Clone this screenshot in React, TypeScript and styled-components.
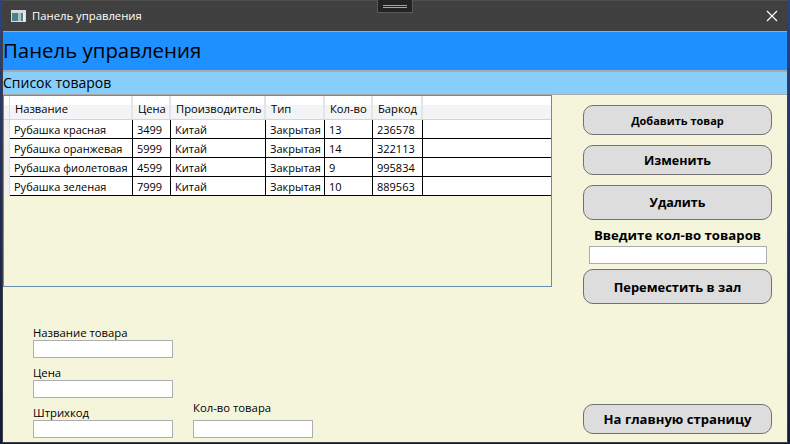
import styled, { createGlobalStyle } from "styled-components";
import { ReactElement } from "react";

const GlobalStyle = createGlobalStyle`
    html, body {
        margin: 0;
        padding: 0;
        background: #16213f;
    }

    * {
        box-sizing: border-box;
    }
`;

const Desktop = styled.div`
    position: relative;
    width: 790px;
    height: 444px;
    overflow: hidden;
    display: flex;
    padding: 0 2px 1px 2px;
    background: linear-gradient(#2a4486, #1c2d5e 45%, #141b38);
`;

const WindowFrame = styled.div`
    flex: 1;
    display: flex;
    flex-direction: column;
    padding: 0 1px 1px 1px;
    background: #404040;
    border-top: 1px solid #4e4e4e;
    font-family: "Open Sans", "Noto Sans", sans-serif;
    color: #000;
`;

const TitleBar = styled.div`
    height: 30px;
    flex: none;
    display: flex;
    align-items: center;
    padding: 0 0 1px 8px;
    gap: 6px;
    color: #fff;
    font-size: 11.3px;
`;

const TitleText = styled.span`
    flex: 1;
`;

const CloseButton = styled.svg`
    width: 12px;
    height: 12px;
    margin-right: 9px;
`;

const DebugBar = styled.div`
    position: absolute;
    left: 377px;
    top: -1px;
    width: 36px;
    height: 14px;
    background: #232323;
    border: 1px solid #5a5a5a;
    display: flex;
    align-items: center;
    justify-content: center;
`;

const DebugGrip = styled.div`
    width: 24px;
    height: 3px;
    border-top: 1px solid #a5a5a5;
    border-bottom: 1px solid #a5a5a5;
`;

const Client = styled.div`
    flex: 1;
    display: flex;
    flex-direction: column;
    min-height: 0;
    background: #f5f5dc;
`;

const HeaderBand = styled.div`
    height: 41px;
    flex: none;
    display: flex;
    align-items: center;
    padding-bottom: 3px;
    background: #1e90ff;
    border-top: 1px solid #a9a9a9;
    border-bottom: 2px solid #a9a9a9;
    font-size: 20.4px;
`;

const SubHeaderBand = styled.div`
    height: 23px;
    flex: none;
    display: flex;
    align-items: center;
    padding-bottom: 2px;
    background: #87cefa;
    border-bottom: 1px solid #a9a9a9;
    font-size: 14px;
`;

const Body = styled.div`
    flex: 1;
    display: flex;
    min-height: 0;
`;

const LeftColumn = styled.div`
    width: 549px;
    flex: none;
    display: flex;
    flex-direction: column;
`;

const GridBox = styled.div`
    height: 192px;
    flex: none;
    background: #f5f5dc;
    border: 1px solid #688caf;
`;

const GridRow = styled.div<{ $header?: boolean }>`
    display: grid;
    grid-template-columns: 6px 123px 38px 95px 59px 48px 50px 1fr;
    height: ${(p) => (p.$header ? "24px" : "19px")};
    font-size: ${(p) => (p.$header ? "11.2px" : "11px")};
    white-space: nowrap;
    background: ${(p) =>
        p.$header
            ? "linear-gradient(#ffffff 0 40%, #f3f4f6 40% 100%)"
            : "transparent"};
    border-bottom: ${(p) => (p.$header ? "1px solid #d5d5d5" : "none")};
`;

const RowGutter = styled.div<{ $header?: boolean }>`
    background: ${(p) => (p.$header ? "transparent" : "#f0f0f0")};
    border-right: 1px solid #dcdcdc;
`;

const HeadCell = styled.div`
    display: flex;
    align-items: center;
    padding: 1px 0 0 5px;
    border-right: 2px solid #e4e4e4;
`;

const BodyCell = styled.div`
    display: flex;
    align-items: center;
    padding-left: 4px;
    background: #fff;
    border-right: 1px solid #000;
    border-bottom: 1px solid #000;
`;

const FillerCell = styled.div`
    background: #fff;
    border-bottom: 1px solid #000;
`;

const FormArea = styled.div`
    flex: 1;
    display: flex;
    align-items: flex-end;
    gap: 20px;
    padding: 0 0 4px 30px;
`;

const FormColumn = styled.div`
    display: flex;
    flex-direction: column;
    gap: 7px;
`;

const Field = styled.label`
    display: flex;
    flex-direction: column;
    font-size: 11.3px;
    line-height: 15px;
`;

const RaisedField = styled(Field)`
    span {
        margin-bottom: 5px;
    }
`;

const TextInput = styled.input<{ $width: number }>`
    display: block;
    width: ${(p) => p.$width}px;
    height: 18px;
    padding: 0;
    background: #fff;
    border: 1px solid #abadb3;
    border-radius: 0;
    outline: none;
`;

const RightColumn = styled.div`
    flex: 1;
    display: flex;
    flex-direction: column;
    align-items: flex-start;
    padding: 10px 0 8px 31px;
`;

const PillButton = styled.button<{ $height: number; $size: number; $gap?: number }>`
    width: 189px;
    height: ${(p) => p.$height}px;
    flex: none;
    margin-bottom: ${(p) => p.$gap ?? 0}px;
    padding: 0;
    background: #dddddd;
    border: 1px solid #707070;
    border-radius: 10px;
    color: #000;
    font-family: inherit;
    font-weight: 700;
    font-size: ${(p) => p.$size}px;
`;

const QuantityLabel = styled.div`
    width: 189px;
    text-align: center;
    font-size: 13.2px;
    font-weight: 700;
    line-height: 16px;
    margin-bottom: 3px;
`;

const QuantityInput = styled(TextInput)`
    margin: 0 0 5px 6px;
`;

const Spacer = styled.div`
    flex: 1;
`;

const products = [
    { name: "Рубашка красная", price: "3499", qty: "13", code: "236578" },
    { name: "Рубашка оранжевая", price: "5999", qty: "14", code: "322113" },
    { name: "Рубашка фиолетовая", price: "4599", qty: "9", code: "995834" },
    { name: "Рубашка зеленая", price: "7999", qty: "10", code: "889563" },
];

const columns = ["Название", "Цена", "Производитель", "Тип", "Кол-во", "Баркод"];

const App = (): ReactElement => {
    return (
        <Desktop>
            <GlobalStyle />
            <DebugBar>
                <DebugGrip />
            </DebugBar>
            <WindowFrame>
                <TitleBar>
                    <svg width="15" height="12" viewBox="0 0 15 12">
                        <rect width="15" height="12" fill="#d9dcdc" />
                        <rect x="1" y="3" width="6" height="8" fill="#4f7f8c" />
                        <rect x="7" y="3" width="3" height="8" fill="#a9c4c8" />
                        <rect x="10" y="3" width="2" height="8" fill="#5f7f88" />
                        <rect x="12" y="3" width="2" height="8" fill="#eef1f1" />
                    </svg>
                    <TitleText>Панель управления</TitleText>
                    <CloseButton viewBox="0 0 12 12">
                        <path d="M1 1 L11 11 M11 1 L1 11" stroke="#fff" strokeWidth="1.2" />
                    </CloseButton>
                </TitleBar>
                <Client>
                    <HeaderBand>Панель управления</HeaderBand>
                    <SubHeaderBand>Список товаров</SubHeaderBand>
                    <Body>
                        <LeftColumn>
                            <GridBox>
                                <GridRow $header>
                                    <RowGutter $header />
                                    {columns.map((label) => (
                                        <HeadCell key={label}>{label}</HeadCell>
                                    ))}
                                    <div />
                                </GridRow>
                                {products.map((item) => (
                                    <GridRow key={item.code}>
                                        <RowGutter />
                                        <BodyCell>{item.name}</BodyCell>
                                        <BodyCell>{item.price}</BodyCell>
                                        <BodyCell>Китай</BodyCell>
                                        <BodyCell>Закрытая</BodyCell>
                                        <BodyCell>{item.qty}</BodyCell>
                                        <BodyCell>{item.code}</BodyCell>
                                        <FillerCell />
                                    </GridRow>
                                ))}
                            </GridBox>
                            <FormArea>
                                <FormColumn>
                                    <Field>
                                        <span>Название товара</span>
                                        <TextInput $width={140} />
                                    </Field>
                                    <Field>
                                        <span>Цена</span>
                                        <TextInput $width={140} />
                                    </Field>
                                    <Field>
                                        <span>Штрихкод</span>
                                        <TextInput $width={140} />
                                    </Field>
                                </FormColumn>
                                <FormColumn>
                                    <RaisedField>
                                        <span>Кол-во товара</span>
                                        <TextInput $width={120} />
                                    </RaisedField>
                                </FormColumn>
                            </FormArea>
                        </LeftColumn>
                        <RightColumn>
                            <PillButton $height={30} $size={11} $gap={10}>Добавить товар</PillButton>
                            <PillButton $height={30} $size={12.5} $gap={10}>Изменить</PillButton>
                            <PillButton $height={35} $size={12.5} $gap={7}>Удалить</PillButton>
                            <QuantityLabel>Введите кол-во товаров</QuantityLabel>
                            <QuantityInput $width={178} />
                            <PillButton $height={35} $size={12.9}>Переместить в зал</PillButton>
                            <Spacer />
                            <PillButton $height={30} $size={13.1}>На главную страницу</PillButton>
                        </RightColumn>
                    </Body>
                </Client>
            </WindowFrame>
        </Desktop>
    );
};

export default App;
